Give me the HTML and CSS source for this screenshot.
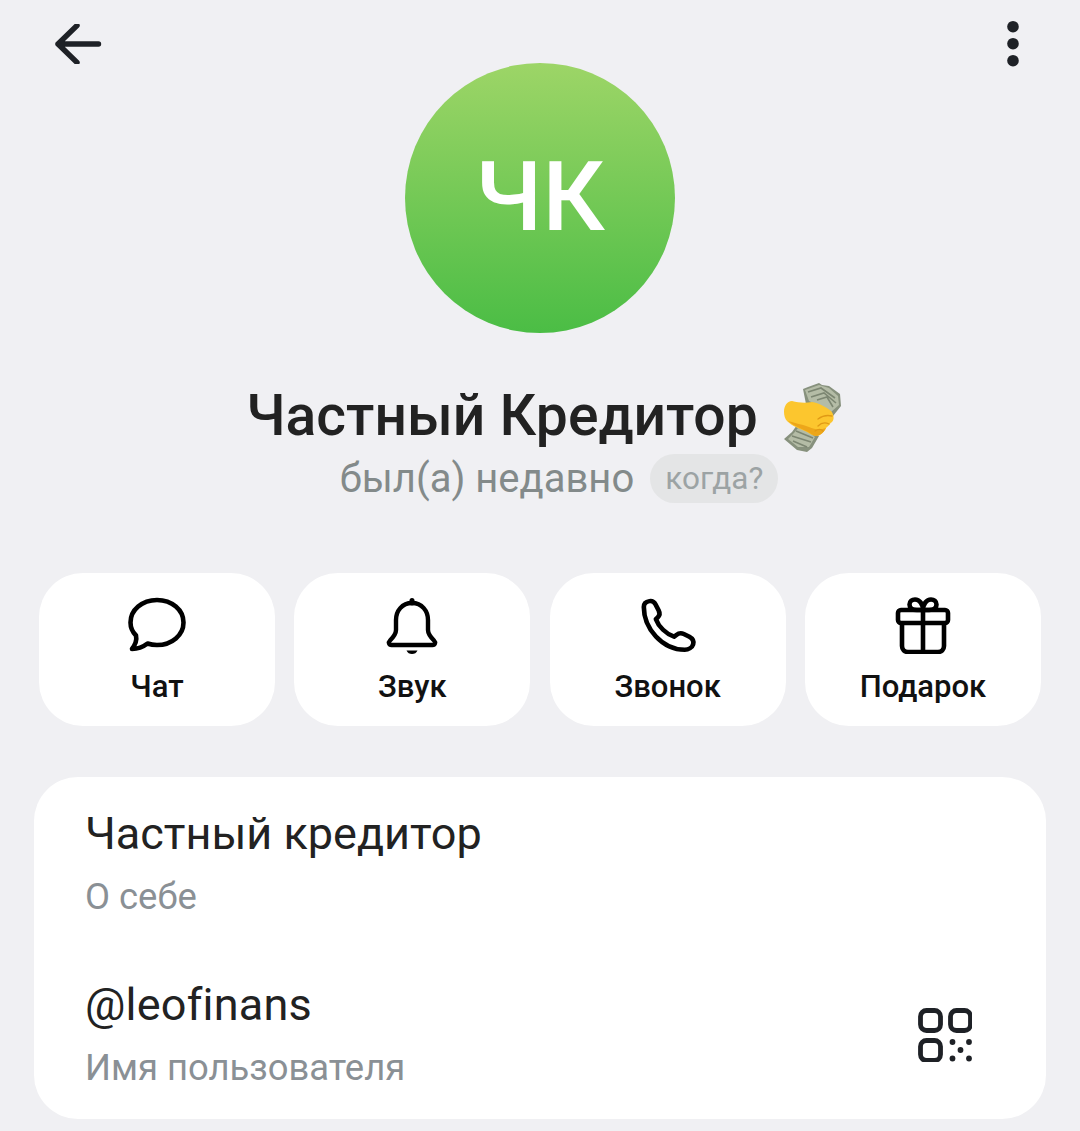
FILE: index.html
```
<!DOCTYPE html>
<html lang="ru">
<head>
<meta charset="utf-8">
<title>Частный Кредитор</title>
<link rel="stylesheet" href="styles.css">
</head>
<body>
<div class="page">
  <header class="topbar">
    <svg class="back" viewBox="0 0 48 40" width="48" height="40"><path d="M3 20H43.500M22 1.500 3 20 22 38.500" fill="none" stroke="#1e2126" stroke-width="5.400" stroke-linecap="round" stroke-linejoin="round"/></svg>
    <svg class="more" viewBox="0 0 14 48" width="14" height="48"><circle cx="7" cy="6.700" r="5.800" fill="#1e2126"/><circle cx="7" cy="23.700" r="5.800" fill="#1e2126"/><circle cx="7" cy="40.700" r="5.800" fill="#1e2126"/></svg>
  </header>
  <div class="avatar">ЧК</div>
  <h1 class="name">Частный Кредитор <svg class="emoji" viewBox="20 10 65 75" width="65" height="75">
    <path d="M42 19 47 17 58 13 61 15 68 16 79 24 80 36 72 46 45 34Z" fill="#87917d"/>
    <path d="M44 20 58 15 68 18 77 26 78 35 70 42 48 31Z" fill="#b4bca6"/>
    <path d="M47 22 60 18 74 28M50 27 63 23 75 33M56 30 66 27 72 37" stroke="#7c8672" stroke-width="1.600" fill="none"/>
    <path d="M36 55 46 58 58 66 51 78 46 82 36 80 23 69 31 62Z" fill="#87917d"/>
    <path d="M37 58 46 61 54 67 48 77 37 77 27 69 33 63Z" fill="#b4bca6"/>
    <path d="M31 66 50 72M35 61 52 68M32 71 46 77" stroke="#7c8672" stroke-width="1.600" fill="none"/>
    <path d="M23 42C23 36 26 31 31 31 38 33 45 33 51 32 58 33 65 37 70 41 73 44 73.500 50 71 52 69 53 68 56 65 58 64 61 60 65 56 66 52 66 49 64 46 62 39 59 31 56 26 51 24 49 23 45 23 42Z" fill="#fcc62e"/>
    <path d="M27 51C33 56 41 59 47 62 50 64 53 66 56 66 60 65 63 62 65 58 60 60 54 60 48 57 40 54 33 53 27 51Z" fill="#eda61a"/>
    <path d="M71 46C67 45 61 46 57 49M68 54C64 52 60 53 57 56M62 61C60 59 57 59 54 61" stroke="#e09a15" stroke-width="1.300" fill="none" stroke-linecap="round"/>
  </svg></h1>
  <div class="status"><span>был(а) недавно</span><span class="when">когда?</span></div>
  <nav class="actions">
    <div class="action">
      <svg class="icon" viewBox="0 0 60 60" width="60" height="60"><path d="M30 6C45 6 56.500 16 56.500 28.500 56.500 41 45 51 30 51 26.500 51 23.500 50.500 20.500 49.500 16 53 10 55 5 55 8 51 10 46 9 41.500 5.500 38 3.500 33.500 3.500 28.500 3.500 16 15 6 30 6Z" fill="none" stroke="#000" stroke-width="4.600" stroke-linejoin="round"/></svg>
      <span class="label">Чат</span>
    </div>
    <div class="action">
      <svg class="icon" viewBox="0 0 60 60" width="60" height="60"><path d="M30 9C20 9 14 17 14 26V36C14 40 11.500 43 8 46.500 6 48.500 7 51 9.500 51H50.500C53 51 54 48.500 52 46.500 48.500 43 46 40 46 36V26C46 17 40 9 30 9Z" fill="none" stroke="#000" stroke-width="4.400" stroke-linejoin="round"/><path d="M30 6.500V9" stroke="#000" stroke-width="5" stroke-linecap="round"/><path d="M24.500 56.500H35.500C34.500 59 32.500 60 30 60 27.500 60 25.500 59 24.500 56.500Z" fill="#000"/></svg>
      <span class="label">Звук</span>
    </div>
    <div class="action">
      <svg class="icon" viewBox="0 0 60 60" width="60" height="60"><path transform="translate(30 31) scale(.93 .9) translate(-30 -30)" d="M4 10C4 6 7 4 10 3.500 13 3 15 4 16.500 7L20 14C21.500 17 21 19.500 19 21.500L17 23.500C20 32 28 40 36.500 43L39 41C41.500 39 44 38.500 47 40L53 43C56.500 45 58 48 57 51.500 56 55 52 57.500 48 57.500 24 57.500 4 34 4 10Z" fill="none" stroke="#000" stroke-width="5" stroke-linejoin="round"/></svg>
      <span class="label">Звонок</span>
    </div>
    <div class="action">
      <svg class="icon" viewBox="0 0 60 60" width="60" height="60"><g fill="none" stroke="#000" stroke-width="4.600" stroke-linejoin="round"><rect x="5" y="16" width="50" height="13" rx="3"/><path d="M9 29V52C9 55.500 11.500 58 15 58H45C48.500 58 51 55.500 51 52V29M30 16V58"/><path d="M30 16H24C19 16 16.500 14 16.500 10.500 16.500 7 19 5.500 22 5.500 26.500 5.500 30 10 30 16ZM30 16H36C41 16 43.500 14 43.500 10.500 43.500 7 41 5.500 38 5.500 33.500 5.500 30 10 30 16Z"/></g></svg>
      <span class="label">Подарок</span>
    </div>
  </nav>
  <section class="card">
    <div class="row">
      <div class="value">Частный кредитор</div>
      <div class="caption">О себе</div>
    </div>
    <div class="row row-user">
      <div>
        <div class="value value-user">@leofinans</div>
        <div class="caption">Имя пользователя</div>
      </div>
      <svg class="qr" viewBox="0 0 54 54" width="54" height="54"><g fill="none" stroke="#1e2126" stroke-width="4.800"><rect x="2.500" y="2.500" width="20" height="20" rx="6"/><rect x="32.500" y="2.500" width="20" height="20" rx="6"/><rect x="2.500" y="32.500" width="20" height="20" rx="6"/></g><g fill="#1e2126"><circle cx="34.500" cy="34" r="2.900"/><circle cx="51" cy="34" r="2.900"/><circle cx="42.500" cy="42" r="2.900"/><circle cx="34.500" cy="50.500" r="2.900"/><circle cx="51" cy="50.500" r="2.900"/></g></svg>
    </div>
  </section>
</div>
</body>
</html>
```
FILE: styles.css
```
* { box-sizing: border-box; }
html, body { margin: 0; padding: 0; }
body { background: #f0f0f3; font-family: Roboto, "Noto Sans", sans-serif; color: #222; }
.page { width: 1080px; height: 1131px; overflow: hidden; padding-top: 20px; display: flex; flex-direction: column; align-items: center; }
.topbar { width: 100%; height: 43px; padding: 0 60px 0 55px; display: flex; justify-content: space-between; align-items: flex-start; }
.back { display: block; margin-top: 3.500px; }
.more { display: block; }
.avatar { width: 270px; height: 270px; border-radius: 50%; background: linear-gradient(#9dd567, #4bbd45); color: #fff; font-size: 97px; font-weight: 500; padding-bottom: 2px; display: flex; align-items: center; justify-content: center; flex: none; }
.name { margin: 44px 0 0; font-size: 57px; font-weight: 500; line-height: 78px; height: 77px; color: #222; display: flex; align-items: center; gap: 23px; white-space: nowrap; }
.emoji { display: block; flex: none; margin: 3px -12px 0 0; }
.status { height: 49px; margin-left: 38px; display: flex; align-items: center; gap: 16px; color: #838a8a; font-size: 40px; }
.when { height: 49px; line-height: 49px; padding: 0 15px; border-radius: 25px; background: #e4e5e6; font-size: 31.500px; color: #9ca3a4; }
.actions { margin-top: 70px; width: 1002px; display: grid; grid-template-columns: repeat(4, 236px); gap: 19.300px; flex: none; }
.action { height: 153px; background: #fff; border-radius: 44px; display: flex; flex-direction: column; align-items: center; padding-top: 21px; }
.icon { display: block; }
.label { margin-top: 15px; font-size: 31px; font-weight: 500; line-height: 36px; color: #111; }
.card { margin-top: 51px; width: 1012px; height: 342px; flex: none; background: #fff; border-radius: 44px; padding: 29px 51px 0; }
.value { font-size: 45px; line-height: 56px; color: #222; }
.value-user { letter-spacing: .2px; }
.caption { font-size: 36.400px; line-height: 44px; color: #8a9095; margin-top: 13px; }
.row-user { margin-top: 58px; display: flex; justify-content: space-between; align-items: center; padding-right: 23px; }
.qr { display: block; flex: none; margin-top: 2px; }
```
